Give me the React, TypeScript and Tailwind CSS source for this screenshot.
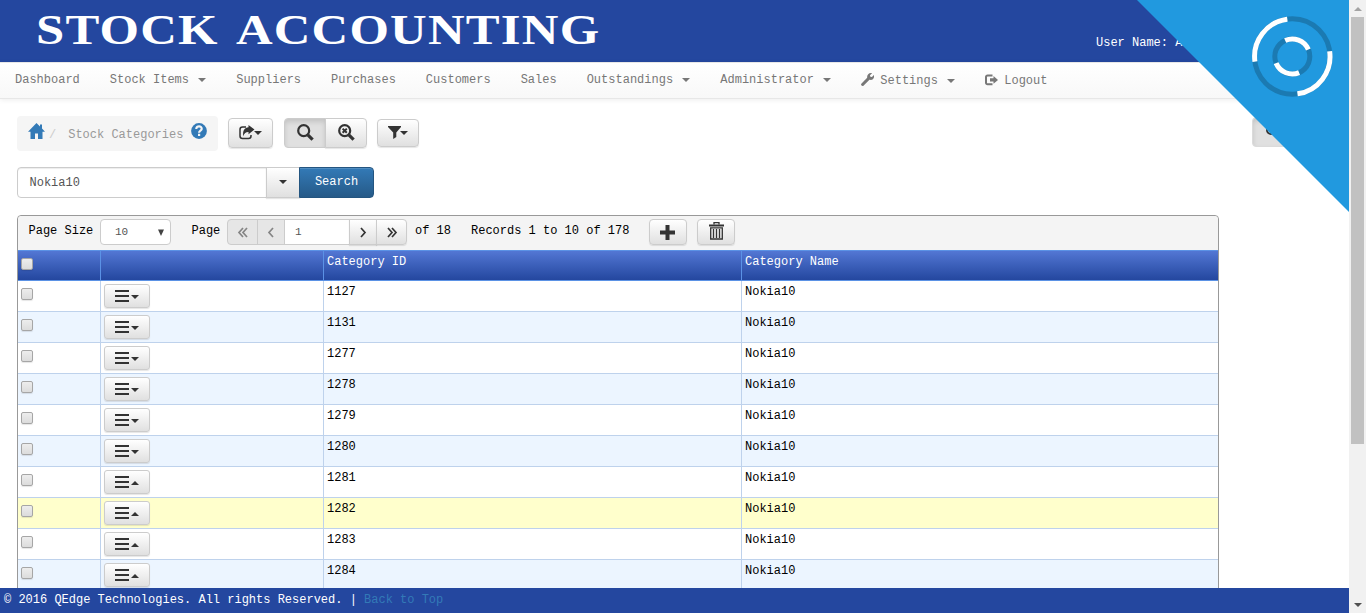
import React from 'react';

const BTN = 'flex items-center justify-center border border-[#ccc] bg-linear-to-b from-white to-[#e0e0e0] shadow-[0_1px_1px_rgba(0,0,0,0.1)] text-[#333]';

function Caret({ up = false, className = '' }: { up?: boolean; className?: string }) {
  return (
    <svg className={`shrink-0 ${className}`} width="8" height="4" viewBox="0 0 8 4" fill="currentColor">
      <path d={up ? 'M0 4L4 0L8 4Z' : 'M0 0L4 4L8 0Z'} />
    </svg>
  );
}

function Wrench() {
  return (
    <svg width="13" height="13" viewBox="0 0 12 12" fill="currentColor">
      <path d="M10.200 0.200L8.300 2l.3 1.500 1.500.2L11.900 1.900C12.600 4.200 11.200 6.200 9 6.400c-.5 0-.9 0-1.200-.1L2.500 11.500c-.6.6-1.400.6-2 .1-.6-.5-.6-1.400 0-2L5.700 4.300C5.300 1.800 7.500-.6 10.200.200Z" />
    </svg>
  );
}

function SignOut() {
  return (
    <svg width="13" height="12" viewBox="0 0 13 12">
      <path d="M7.500 1.500H2.500a1.500 1.500 0 0 0-1.500 1.500v5.700A1.500 1.500 0 0 0 2.500 10.200H7.500" fill="none" stroke="currentColor" strokeWidth="2" />
      <path d="M5 4.200H8.500V2L13 5.900L8.500 9.800V7.500H5Z" fill="currentColor" />
    </svg>
  );
}

function Home() {
  return (
    <svg width="17" height="16" viewBox="0 0 17 16" fill="#337ab7">
      <path d="M8.500 0L0 8.700h2.500V16h4.500V10.500h3V16h4.500V8.700H17L14 5.600V1.500h-2v2.100Z" />
    </svg>
  );
}

function Help() {
  return (
    <svg width="16" height="16" viewBox="0 0 16 16">
      <circle cx="8" cy="8" r="7.900" fill="#337ab7" />
      <path d="M5.300 6C5.300 2.300 10.900 2.500 10.700 5.900C10.600 7.700 8.100 7.600 8.100 9.700M8.100 10.700v2.200" fill="none" stroke="#f5f5f5" strokeWidth="2.200" />
    </svg>
  );
}

function Share() {
  return (
    <svg width="16" height="15" viewBox="0 0 16 15">
      <path d="M7 1.900H3.500Q1 1.900 1 4.400v6.700q0 2.500 2.500 2.500h6q2.500 0 2.500-2.500V10" fill="none" stroke="currentColor" strokeWidth="1.500" />
      <path d="M9.500 0L15.500 4.600L9.500 9.200V6.900C7 6.800 5.200 7.900 4.400 11.300C3.200 5.700 5.800 2.200 9.500 2.200Z" fill="currentColor" />
    </svg>
  );
}

function Magnifier({ clear = false }: { clear?: boolean }) {
  return (
    <svg width="17" height="17" viewBox="0 0 17 17" fill="none" stroke="currentColor">
      <circle cx="6.700" cy="6.700" r="5.500" strokeWidth="2.200" />
      <path d="M10.800 10.800L15.600 15.600" strokeWidth="3.200" />
      {clear && <path d="M4.600 4.600L8.800 8.800M8.800 4.600L4.600 8.800" strokeWidth="2" />}
    </svg>
  );
}

function Funnel() {
  return (
    <svg width="13" height="13" viewBox="0 0 13 13" fill="currentColor">
      <path d="M0 0H13V1L8.300 6.500V11L5.200 13V6.500L0 1Z" />
    </svg>
  );
}

function Chevrons({ double = false, left = false }: { double?: boolean; left?: boolean }) {
  return (
    <svg width="12" height="11" viewBox="0 0 12 11" fill="none" stroke="currentColor" strokeWidth="1.700" className={left ? '-scale-x-100' : ''}>
      {double ? <path d="M2 1L6 5.500L2 10M6 1L10 5.500L6 10" /> : <path d="M4 1L8 5.500L4 10" />}
    </svg>
  );
}

function Trash() {
  return (
    <svg width="15" height="18" viewBox="0 0 15 18" fill="none" stroke="currentColor">
      <path d="M0 3.500H15" strokeWidth="2" />
      <path d="M5 2.500V.700H10V2.500" strokeWidth="1.300" />
      <path d="M1.700 5.800H13.300V17H1.700ZM4.500 7v9M7.500 7v9M10.500 7v9" strokeWidth="1.300" />
    </svg>
  );
}

function Bars() {
  return (
    <svg width="14" height="12" viewBox="0 0 14 12" fill="currentColor" shapeRendering="crispEdges">
      <path d="M0 0h14v2H0zM0 5h14v2H0zM0 10h14v2H0z" />
    </svg>
  );
}

function Check() {
  return <span className="block h-3 w-3 shrink-0 rounded-[2px] border border-[#a6a6a6] bg-linear-to-b from-[#ededed] to-[#dcdcdc] shadow-[0_1px_1px_rgba(0,0,0,0.1)]" />;
}

const NAV: { label: string; caret?: boolean; icon?: React.ReactNode }[] = [
  { label: 'Dashboard' },
  { label: 'Stock Items', caret: true },
  { label: 'Suppliers' },
  { label: 'Purchases' },
  { label: 'Customers' },
  { label: 'Sales' },
  { label: 'Outstandings', caret: true },
  { label: 'Administrator', caret: true },
  { label: 'Settings', caret: true, icon: <Wrench /> },
  { label: 'Logout', icon: <SignOut /> },
];

const ROWS = ['1127', '1131', '1277', '1278', '1279', '1280', '1281', '1282', '1283', '1284'];

function Loader() {
  return (
    <svg className="absolute top-0 right-0" width="212" height="212" viewBox="0 0 212 212">
      <path d="M0 0H212V212Z" fill="#2199df" />
      <g transform="translate(155.300 56.500)" fill="none" strokeWidth="5">
        <circle r="37.700" stroke="#1b7ab2" />
        <circle r="37.700" stroke="#fff" strokeDasharray="59.220 59.220" transform="rotate(-8)" />
        <circle r="17.500" stroke="#1b7ab2" />
        <circle r="17.500" stroke="#fff" strokeDasharray="27.490 27.490" transform="rotate(-114)" />
      </g>
    </svg>
  );
}

export default function App() {
  return (
    <div className="flex h-[613px] w-[1366px] overflow-hidden bg-white font-['Liberation_Mono','Courier_New',monospace] text-[12px] leading-4 text-black">
      <div className="relative flex w-[1349px] flex-col overflow-hidden">
        <header className="flex h-[62px] shrink-0 items-start justify-between bg-[#24479f] text-white">
          <h1 className="mt-[6px] ml-[36px] origin-left scale-x-[1.208] font-['Liberation_Serif',serif] text-[42px] leading-[48px] font-bold tracking-[1px] [word-spacing:5px] whitespace-nowrap">STOCK ACCOUNTING</h1>
          <span className="mt-[35px] w-[253px] whitespace-nowrap">User Name: Admin</span>
        </header>

        <nav className="flex h-[37px] shrink-0 items-center gap-[30px] border-y border-[#e7e7e7] bg-linear-to-b from-white to-[#f8f8f8] pl-[15px] pb-px text-[#777] shadow-[0_1px_5px_rgba(0,0,0,0.075)]">
          {NAV.map((n) => (
            <a key={n.label} className={`flex items-center whitespace-nowrap ${n.icon ? 'pt-px' : ''}`}>
              {n.icon && <span className="-mt-[2px] mr-[7.2px] w-3 shrink-0">{n.icon}</span>}
              {n.label}
              {n.caret && <Caret className="ml-[9.2px]" />}
            </a>
          ))}
        </nav>

        <main className="flex h-[489px] shrink-0 flex-col overflow-hidden pl-[17px]">
          <div className="mt-[17px] flex h-[35px] shrink-0 items-center">
            <div className="flex h-[35px] w-[201px] shrink-0 items-center rounded bg-[#f5f5f5] pl-[11px] text-[#999]">
              <span className="-mt-[5px]"><Home /></span>
              <span className="mt-[2px] ml-[4px] text-[#ccc]">/</span>
              <span className="mt-[2px] ml-[12px] whitespace-nowrap">Stock Categories</span>
              <span className="-mt-[5px] ml-[8px]"><Help /></span>
            </div>
            <div className="flex items-center pb-[2px]">
              <div className={`${BTN} ml-[10px] h-[30px] w-[45px] rounded`}><Share /><Caret className="mt-px -ml-px" /></div>
              <div className="ml-[11px] flex">
                <div className="flex h-[30px] w-[42px] items-center justify-center rounded-l border border-[#ccc] bg-[#e0e0e0] text-[#333] shadow-[inset_0_3px_5px_rgba(0,0,0,0.125)]"><Magnifier /></div>
                <div className={`${BTN} -ml-px h-[30px] w-[42px] rounded-r`}><Magnifier clear /></div>
              </div>
              <div className={`${BTN} ml-[10px] h-[28px] w-[42px] rounded`}><Funnel /><Caret className="-ml-px" /></div>
              <div className="ml-[833px] -mt-[2px] flex h-[30px] w-[44px] shrink-0 items-center rounded border border-[#dbdbdb] bg-[#e0e0e0] pl-[13px] text-[#333] shadow-[inset_0_3px_5px_rgba(0,0,0,0.125)]">
                <svg width="14" height="14" viewBox="0 0 14 14" fill="none" stroke="currentColor" strokeWidth="2"><circle cx="5" cy="5" r="4" /></svg>
              </div>
            </div>
          </div>

          <div className="mt-4 flex h-[31px] shrink-0 text-[#555]">
            <div className="flex w-[250px] items-center rounded-l border border-[#ccc] pl-[11.500px] shadow-[inset_0_1px_1px_rgba(0,0,0,0.075)]">Nokia10</div>
            <div className={`${BTN} -ml-px w-[34px]`}><Caret className="-mt-[2px]" /></div>
            <div className="-ml-px flex w-[75px] items-center justify-center rounded-r border border-[#245580] bg-linear-to-b from-[#337ab7] to-[#265a88] pb-[2px] text-white shadow-[inset_0_1px_0_rgba(255,255,255,0.15)]">Search</div>
          </div>

          <section className="mt-[17px] w-[1202px] shrink-0 rounded-t border border-[#999]">
            <div className="flex h-[34px] items-center rounded-t bg-[#f4f4f4] pb-[2px] whitespace-nowrap">
              <span className="ml-[10.500px] -mt-[3px] w-[71.500px]">Page Size</span>
              <div className="flex h-[26px] w-[71px] items-center justify-between rounded border border-[#ccc] bg-white pr-[6px] pl-[14px] text-[11px] text-[#555]">
                10
                <svg width="6" height="7" viewBox="0 0 6 7"><path d="M0 .500H6L3 7Z" fill="#444" /></svg>
              </div>
              <span className="ml-[20.500px] -mt-[3px] w-[35.500px]">Page</span>
              <div className="flex h-[26px]">
                <div className="flex w-[31px] items-center justify-center rounded-l border border-[#ccc] bg-[#e6e6e6] text-[#858585]"><Chevrons double left /></div>
                <div className="-ml-px flex w-[28px] items-center justify-center border border-[#ccc] bg-[#e6e6e6] text-[#858585]"><Chevrons left /></div>
                <div className="-ml-px flex w-[66px] items-center border border-[#ccc] bg-white pl-[10px] text-[11px] text-[#555]">1</div>
                <div className={`${BTN} -ml-px w-[28px]`}><Chevrons /></div>
                <div className={`${BTN} -ml-px w-[31px] rounded-r`}><Chevrons double /></div>
              </div>
              <span className="ml-[8px] -mt-[3px] w-[56px]">of 18</span>
              <span className="-mt-[3px] w-[178px]">Records 1 to 10 of 178</span>
              <div className={`${BTN} h-[26px] w-[38px] rounded pr-[2px]`}>
                <svg width="15" height="15" viewBox="0 0 15 15" fill="currentColor"><path d="M5.500 0h4v5.500H15v4H9.500V15H5.500V9.500H0V5.500h5.500z" /></svg>
              </div>
              <div className={`${BTN} ml-[10px] h-[26px] w-[38px] rounded pb-[2px]`}><Trash /></div>
            </div>

            <div className="grid h-[31px] grid-cols-[83px_223px_418px_476px] border-y border-[#5b92e5] bg-linear-to-b from-[#5377d4] to-[#24479f] text-white">
              <div className="border-r border-[#5b92e5] pt-[7px] pl-[3px]"><Check /></div>
              <div className="border-r border-[#5b92e5]" />
              <div className="border-r border-[#5b92e5] pt-[3px] pl-[3px]">Category ID</div>
              <div className="pt-[3px] pl-[3px]">Category Name</div>
            </div>

            {ROWS.map((id, i) => (
              <div key={id} className={`grid h-[31px] grid-cols-[83px_223px_418px_476px] border-b border-[#bed2ec] ${i === 7 ? 'bg-[#ffffcc]' : i % 2 ? 'bg-[#ecf5ff]' : 'bg-white'}`}>
                <div className="border-r border-[#bed2ec] pt-[7px] pl-[3px]"><Check /></div>
                <div className="border-r border-[#bed2ec] pt-[3px] pl-[3px]">
                  <div className={`${BTN} h-[24px] w-[46px] gap-[2px] rounded-[3px]`}><Bars /><Caret up={i > 5} className="mt-px" /></div>
                </div>
                <div className="border-r border-[#bed2ec] pt-[3px] pl-[3px]">{id}</div>
                <div className="pt-[3px] pl-[3px]">Nokia10</div>
              </div>
            ))}
          </section>
        </main>

        <footer className="flex h-[25px] shrink-0 items-center bg-[#24479f] pb-[2px] pl-[4px] whitespace-pre text-white">
          © 2016 QEdge Technologies. All rights Reserved. | <a className="text-[#337ab7]">Back to Top</a>
        </footer>

        <Loader />
      </div>

      <div className="flex w-[17px] flex-col items-center bg-[#f1f1f1]">
        <div className="flex h-[17px] items-center text-[#a3a3a3]"><Caret up /></div>
        <div className="h-[427px] w-[13px] bg-[#c1c1c1]" />
        <div className="mt-auto flex h-[17px] items-center text-[#505050]"><Caret /></div>
      </div>
    </div>
  );
}
